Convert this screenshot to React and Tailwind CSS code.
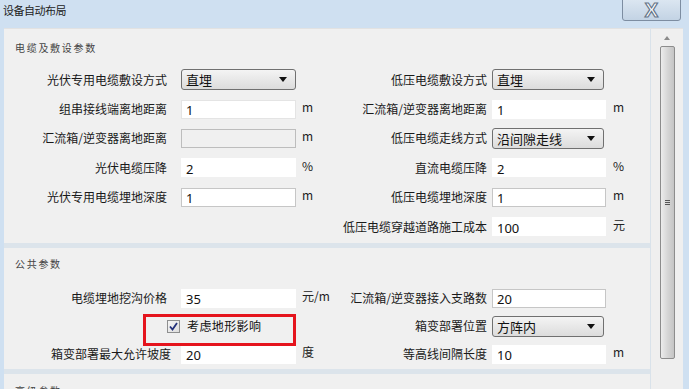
import React from "react";

const CJK = "font-['Microsoft_YaHei','Noto_Sans_CJK_SC',sans-serif]";
const NUM = "font-['Segoe_UI','Noto_Sans','Noto_Sans_CJK_SC',sans-serif]";

function Arrow() {
  return (
    <svg width="8" height="5" viewBox="0 0 8 5">
      <path d="M0 0 H8 L4 5 Z" fill="#111" />
    </svg>
  );
}

function Select({ value, w = "w-[112px]" }) {
  return (
    <div
      className={`${w} h-[21px] border border-[#707070] rounded-[3px] bg-gradient-to-b from-[#f4f4f4] to-[#dcdcdc] flex items-center justify-between pl-[4px] pr-[8px]`}
    >
      <span className={`${CJK} text-[13px] text-[#111] leading-none`}>{value}</span>
      <Arrow />
    </div>
  );
}

function TextBox({ value = "", kind = "light", w = "w-[115px]" }) {
  const b =
    kind === "dark"
      ? "border-[#c6c6c6] bg-white"
      : kind === "disabled"
      ? "border-[#bdbdbd] bg-[#f0f0f0]"
      : kind === "none"
      ? "border-white bg-white"
      : "border-[#e4e4e4] bg-white";
  return (
    <div className={`${w} h-[19px] border ${b} flex items-center pl-[4px]`}>
      <span className={`${NUM} text-[13px] text-[#111] leading-none pt-[3px]`}>{value}</span>
    </div>
  );
}

function Label({ children, w }) {
  return (
    <div className={`${w} shrink-0 text-right ${CJK} text-[12px] text-[#1a1a1a] leading-none whitespace-nowrap`}>
      {children}
    </div>
  );
}

function Unit({ children, ml }) {
  return (
    <span className={`${ml} ${CJK} text-[12px] text-[#222] leading-none -mt-[4px]`}>{children}</span>
  );
}

function Left({ label, control, unit, lw = "w-[162px]", gap = "ml-[14px]" }) {
  return (
    <div className="w-[330px] shrink-0 flex items-center">
      {label ? <Label w={lw}>{label}</Label> : <div className="w-[162px]" />}
      <div className={gap}>{control}</div>
      {unit && <Unit ml="ml-[6px]">{unit}</Unit>}
    </div>
  );
}

function Right({ label, control, unit }) {
  if (!label) return <div />;
  return (
    <div className="flex items-center">
      <Label w="w-[152px]">{label}</Label>
      <div className="ml-[5px]">{control}</div>
      {unit && <Unit ml="ml-[7px]">{unit}</Unit>}
    </div>
  );
}

function SectionHeader({ children }) {
  return (
    <div className={`${CJK} text-[10px] tracking-[1.7px] text-[#444] leading-none pl-[10px]`}>
      {children}
    </div>
  );
}

export default function App() {
  return (
    <div className="w-[689px] h-[389px] bg-[#cfe0f1] overflow-hidden flex flex-col">
      {/* title bar */}
      <div className="h-[28px] shrink-0 flex items-start justify-between">
        <div className={`${CJK} text-[11px] text-[#222] leading-none pl-[3px] pt-[5px] tracking-[-0.5px]`}>设备自动布局</div>
        <div className="mr-[8px] -mt-[1px] w-[59px] h-[22px] border border-[#7d8da1] rounded-b-[3px] bg-gradient-to-b from-[#dbe6f1] to-[#c3d3e4] flex items-center justify-center">
          <span className="font-['Liberation_Sans',sans-serif] font-bold text-[20px] leading-none text-white [-webkit-text-stroke:1.2px_#66768a]">
            X
          </span>
        </div>
      </div>

      {/* body */}
      <div className="flex-1 flex pl-[4px] pr-[6px] min-h-0">
        <div className="flex-1 flex bg-[#f0f0f0] border-t border-[#e2e2e2] min-h-0">
          {/* content */}
          <div className="w-[647px] flex flex-col overflow-hidden border-r border-[#d9e2ea]">
            {/* section 1 */}
            <div className="h-[214px] shrink-0 pl-[1px] pt-[14px]">
              <SectionHeader>电缆及敷设参数</SectionHeader>
              <div className="mt-[12px] flex flex-col">
                <div className="flex items-center h-[29.4px]">
                  <Left label="光伏专用电缆敷设方式" control={<Select value="直埋" w="w-[115px]" />} />
                  <Right label="低压电缆敷设方式" control={<Select value="直埋" />} />
                </div>
                <div className="flex items-center h-[29.4px]">
                  <Left label="组串接线端离地距离" control={<TextBox value="1" />} unit="m" />
                  <Right label="汇流箱/逆变器离地距离" control={<TextBox value="1" kind="none" w="w-[114px]" />} unit="m" />
                </div>
                <div className="flex items-center h-[29.4px]">
                  <Left label="汇流箱/逆变器离地距离" control={<TextBox kind="disabled" />} unit="m" />
                  <Right label="低压电缆走线方式" control={<Select value="沿间隙走线" />} />
                </div>
                <div className="flex items-center h-[29.4px]">
                  <Left label="光伏电缆压降" control={<TextBox value="2" kind="none" />} unit="%" />
                  <Right label="直流电缆压降" control={<TextBox value="2" kind="none" w="w-[114px]" />} unit="%" />
                </div>
                <div className="flex items-center h-[29.4px]">
                  <Left label="光伏专用电缆埋地深度" control={<TextBox value="1" kind="dark" />} unit="m" />
                  <Right label="低压电缆埋地深度" control={<TextBox value="1" kind="dark" w="w-[114px]" />} unit="m" />
                </div>
                <div className="flex items-center h-[29.4px]">
                  <div className="w-[330px] shrink-0" />
                  <Right label="低压电缆穿越道路施工成本" control={<TextBox value="100" kind="none" w="w-[114px]" />} unit="元" />
                </div>
              </div>
            </div>

            <div className="h-[5px] shrink-0 bg-[#dce4eb]" />

            {/* section 2 */}
            <div className="h-[121px] shrink-0 pl-[1px] pt-[11px]">
              <SectionHeader>公共参数</SectionHeader>
              <div className="mt-[15px] flex flex-col">
                <div className="flex items-center h-[28px]">
                  <Left label="电缆埋地挖沟价格" control={<TextBox value="35" kind="none" />} unit="元/m" />
                  <Right label="汇流箱/逆变器接入支路数" control={<TextBox value="20" kind="dark" w="w-[114px]" />} />
                </div>
                <div className="flex items-center h-[28px]">
                  <div className="w-[330px] shrink-0 relative flex items-center">
                    <div className="ml-[162px] w-[13px] h-[13px] border border-[#8e8f8f] bg-gradient-to-br from-[#f4f4f4] to-[#dedede] flex items-center justify-center">
                      <svg width="9" height="9" viewBox="0 0 9 9">
                        <path d="M1 4.5 L3.5 7.5 L8 1" fill="none" stroke="#23317a" strokeWidth="1.8" />
                      </svg>
                    </div>
                    <span className={`ml-[7px] ${CJK} text-[12px] tracking-[0.4px] text-[#111] leading-none`}>考虑地形影响</span>
                    <div className="absolute left-[138px] top-[-6px] w-[153px] h-[32px] border-[3px] border-[#e5141d]" />
                  </div>
                  <Right label="箱变部署位置" control={<Select value="方阵内" />} />
                </div>
                <div className="flex items-center h-[28px]">
                  <Left label="箱变部署最大允许坡度" lw="w-[166px]" gap="ml-[10px]" control={<TextBox value="20" kind="none" />} unit="度" />
                  <Right label="等高线间隔长度" control={<TextBox value="10" kind="none" w="w-[114px]" />} unit="m" />
                </div>
              </div>
            </div>

            <div className="h-[5px] shrink-0 bg-[#dce4eb]" />

            {/* section 3 */}
            <div className="flex-1 pl-[1px] pt-[12px]">
              <SectionHeader>高级参数</SectionHeader>
            </div>
          </div>

          {/* scrollbar */}
          <div className="flex-1 flex flex-col items-center bg-[#efefef]">
            <div className="h-[17px] flex items-center justify-center">
              <svg width="6" height="4" viewBox="0 0 6 4">
                <path d="M0 4 L3 0 L6 4 Z" fill="#8a8a8a" />
              </svg>
            </div>
            <div className="w-[15px] h-[313px] border border-[#8c8c8c] rounded-[2px] bg-gradient-to-r from-[#ececec] via-[#d6d6d6] to-[#c4c4c4] flex items-center justify-center">
              <div className="flex flex-col gap-[1px]">
                <div className="w-[5px] h-[1px] bg-[#555]" />
                <div className="w-[5px] h-[1px] bg-[#555]" />
                <div className="w-[5px] h-[1px] bg-[#555]" />
              </div>
            </div>
          </div>
        </div>
      </div>
    </div>
  );
}
